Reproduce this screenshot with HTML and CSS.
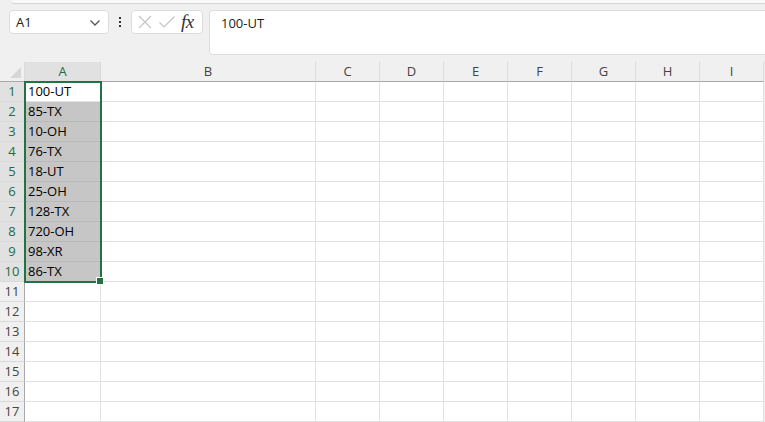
FILE: index.html
```html
<!DOCTYPE html>
<html>
<head>
<meta charset="utf-8">
<link rel="stylesheet" href="styles.css">
</head>
<body>
<div class="app">
  <div class="ribbon-edge"></div>
  <div class="fbar">
    <div class="namebox">
      <span class="name">A1</span>
      <svg class="chev" width="12" height="8" viewBox="0 0 12 8"><path d="M1.5 1.5 L6 6 L10.5 1.5" fill="none" stroke="#555" stroke-width="1.3"/></svg>
    </div>
    <div class="dots"><span></span><span></span><span></span></div>
    <div class="fbtns">
      <svg width="16" height="16" viewBox="0 0 16 16"><path d="M2 2 L14 14 M14 2 L2 14" stroke="#c4c4c4" stroke-width="1.2"/></svg>
      <svg width="18" height="16" viewBox="0 0 18 16"><path d="M1.5 8.5 L6 13 L16.5 2.5" fill="none" stroke="#c4c4c4" stroke-width="1.2"/></svg>
      <span class="fx">fx</span>
    </div>
    <div class="finput">100-UT</div>
  </div>
  <div class="sheet">
    <div class="grid">
      <div class="corner"><span class="tri"></span></div>
      <div class="ch sel">A</div>
      <div class="ch">B</div>
      <div class="ch">C</div>
      <div class="ch">D</div>
      <div class="ch">E</div>
      <div class="ch">F</div>
      <div class="ch">G</div>
      <div class="ch">H</div>
      <div class="ch last">I</div>

      <div class="rh sel">1</div><div class="c active">100-UT</div><div class="c"></div><div class="c"></div><div class="c"></div><div class="c"></div><div class="c"></div><div class="c"></div><div class="c"></div><div class="c"></div>
      <div class="rh sel">2</div><div class="c hl">85-TX</div><div class="c"></div><div class="c"></div><div class="c"></div><div class="c"></div><div class="c"></div><div class="c"></div><div class="c"></div><div class="c"></div>
      <div class="rh sel">3</div><div class="c hl">10-OH</div><div class="c"></div><div class="c"></div><div class="c"></div><div class="c"></div><div class="c"></div><div class="c"></div><div class="c"></div><div class="c"></div>
      <div class="rh sel">4</div><div class="c hl">76-TX</div><div class="c"></div><div class="c"></div><div class="c"></div><div class="c"></div><div class="c"></div><div class="c"></div><div class="c"></div><div class="c"></div>
      <div class="rh sel">5</div><div class="c hl">18-UT</div><div class="c"></div><div class="c"></div><div class="c"></div><div class="c"></div><div class="c"></div><div class="c"></div><div class="c"></div><div class="c"></div>
      <div class="rh sel">6</div><div class="c hl">25-OH</div><div class="c"></div><div class="c"></div><div class="c"></div><div class="c"></div><div class="c"></div><div class="c"></div><div class="c"></div><div class="c"></div>
      <div class="rh sel">7</div><div class="c hl">128-TX</div><div class="c"></div><div class="c"></div><div class="c"></div><div class="c"></div><div class="c"></div><div class="c"></div><div class="c"></div><div class="c"></div>
      <div class="rh sel">8</div><div class="c hl">720-OH</div><div class="c"></div><div class="c"></div><div class="c"></div><div class="c"></div><div class="c"></div><div class="c"></div><div class="c"></div><div class="c"></div>
      <div class="rh sel">9</div><div class="c hl">98-XR</div><div class="c"></div><div class="c"></div><div class="c"></div><div class="c"></div><div class="c"></div><div class="c"></div><div class="c"></div><div class="c"></div>
      <div class="rh sel">10</div><div class="c hl">86-TX</div><div class="c"></div><div class="c"></div><div class="c"></div><div class="c"></div><div class="c"></div><div class="c"></div><div class="c"></div><div class="c"></div>
      <div class="rh">11</div><div class="c"></div><div class="c"></div><div class="c"></div><div class="c"></div><div class="c"></div><div class="c"></div><div class="c"></div><div class="c"></div><div class="c"></div>
      <div class="rh">12</div><div class="c"></div><div class="c"></div><div class="c"></div><div class="c"></div><div class="c"></div><div class="c"></div><div class="c"></div><div class="c"></div><div class="c"></div>
      <div class="rh">13</div><div class="c"></div><div class="c"></div><div class="c"></div><div class="c"></div><div class="c"></div><div class="c"></div><div class="c"></div><div class="c"></div><div class="c"></div>
      <div class="rh">14</div><div class="c"></div><div class="c"></div><div class="c"></div><div class="c"></div><div class="c"></div><div class="c"></div><div class="c"></div><div class="c"></div><div class="c"></div>
      <div class="rh">15</div><div class="c"></div><div class="c"></div><div class="c"></div><div class="c"></div><div class="c"></div><div class="c"></div><div class="c"></div><div class="c"></div><div class="c"></div>
      <div class="rh">16</div><div class="c"></div><div class="c"></div><div class="c"></div><div class="c"></div><div class="c"></div><div class="c"></div><div class="c"></div><div class="c"></div><div class="c"></div>
      <div class="rh">17</div><div class="c"></div><div class="c"></div><div class="c"></div><div class="c"></div><div class="c"></div><div class="c"></div><div class="c"></div><div class="c"></div><div class="c"></div>
    </div>
    <div class="selection"><span class="handle"></span></div>
  </div>
</div>
</body>
</html>
```

FILE: styles.css
```css
* { box-sizing: border-box; }
html, body { margin: 0; padding: 0; }
body {
  width: 765px;
  height: 422px;
  overflow: hidden;
  background: #f0f0f0;
  font-family: "Open Sans", "Noto Sans", sans-serif;
}
.app { width: 765px; height: 422px; position: relative; }
.ribbon-edge {
  margin-left: 11px;
  height: 3px;
  background: #f9f9f9;
  border-bottom-left-radius: 6px;
  box-shadow: 0 1px 1px rgba(0,0,0,0.12);
}
.fbar {
  display: flex;
  align-items: flex-start;
  padding: 7px 0 0 9px;
  height: 59px;
}
.namebox {
  width: 100px;
  height: 24px;
  background: #fff;
  border: 1px solid #dcdcdc;
  border-radius: 4px;
  display: flex;
  align-items: center;
  justify-content: space-between;
  padding: 0 7px 0 6px;
  font-size: 13px;
  color: #222;
}
.chev { margin-top: 1px; }
.dots {
  width: 22px;
  height: 24px;
  display: flex;
  flex-direction: column;
  align-items: center;
  justify-content: center;
  gap: 2px;
}
.dots span { width: 2px; height: 2px; background: #333; display: block; }
.fbtns {
  width: 72px;
  height: 24px;
  background: #fff;
  border: 1px solid #dcdcdc;
  border-radius: 4px;
  display: flex;
  align-items: center;
  padding: 0 0 0 5px;
  gap: 5px;
}
.fx {
  font-family: "Liberation Serif", "DejaVu Serif", serif;
  font-style: italic;
  font-size: 19px;
  line-height: 20px;
  color: #333;
  margin-left: 0;
  letter-spacing: -0.5px;
}
.finput {
  margin-left: 6px;
  flex: 1;
  height: 45px;
  background: #fff;
  border: 1px solid #dcdcdc;
  border-right: none;
  border-radius: 4px 0 0 4px;
  padding: 3px 0 0 11px;
  font-size: 13px;
  color: #222;
}
.sheet { position: relative; }
.grid {
  display: grid;
  grid-template-columns: 25px 76px 215px repeat(7, 64px);
  grid-template-rows: 20px repeat(17, 20px);
}
.corner {
  background: #f0f0f0;
  border-bottom: 1px solid #a8a8a8;
  border-right: 1px solid #dadada;
  position: relative;
}
.tri {
  position: absolute;
  right: 3px;
  bottom: 3px;
  width: 0;
  height: 0;
  border-left: 11px solid transparent;
  border-bottom: 11px solid #d6d6d6;
}
.ch {
  background: #f0f0f0;
  border-bottom: 1px solid #a8a8a8;
  border-right: 1px solid #dadada;
  text-align: center;
  font-size: 13px;
  line-height: 19px;
  color: #444;
}
.ch.sel { background: #e1e1e1; color: #1e6b44; border-bottom: 1px solid #a8a8a8; }
.rh {
  background: #f0f0f0;
  border-right: 1px solid #a8a8a8;
  border-bottom: 1px solid #dadada;
  text-align: center;
  font-size: 13px;
  line-height: 19px;
  color: #444;
}
.rh.sel { background: #e1e1e1; color: #1e6b44; }
.c {
  background: #fff;
  border-right: 1px solid #e1e1e1;
  border-bottom: 1px solid #e1e1e1;
  font-family: "Open Sans", "Noto Sans", sans-serif;
  font-size: 13px;
  line-height: 19px;
  padding-left: 3px;
  color: #000;
  white-space: nowrap;
}
.c.hl { background: #c6c6c6; border-bottom-color: #b9b9b9; border-right-color: #b9b9b9; }
.selection {
  position: absolute;
  left: 24px;
  top: 19px;
  width: 78px;
  height: 202px;
  border: 2px solid #217346;
  pointer-events: none;
}
.handle {
  position: absolute;
  right: -4px;
  bottom: -4px;
  width: 6px;
  height: 6px;
  background: #217346;
  border: 1px solid #fff;
  box-sizing: content-box;
}
```
